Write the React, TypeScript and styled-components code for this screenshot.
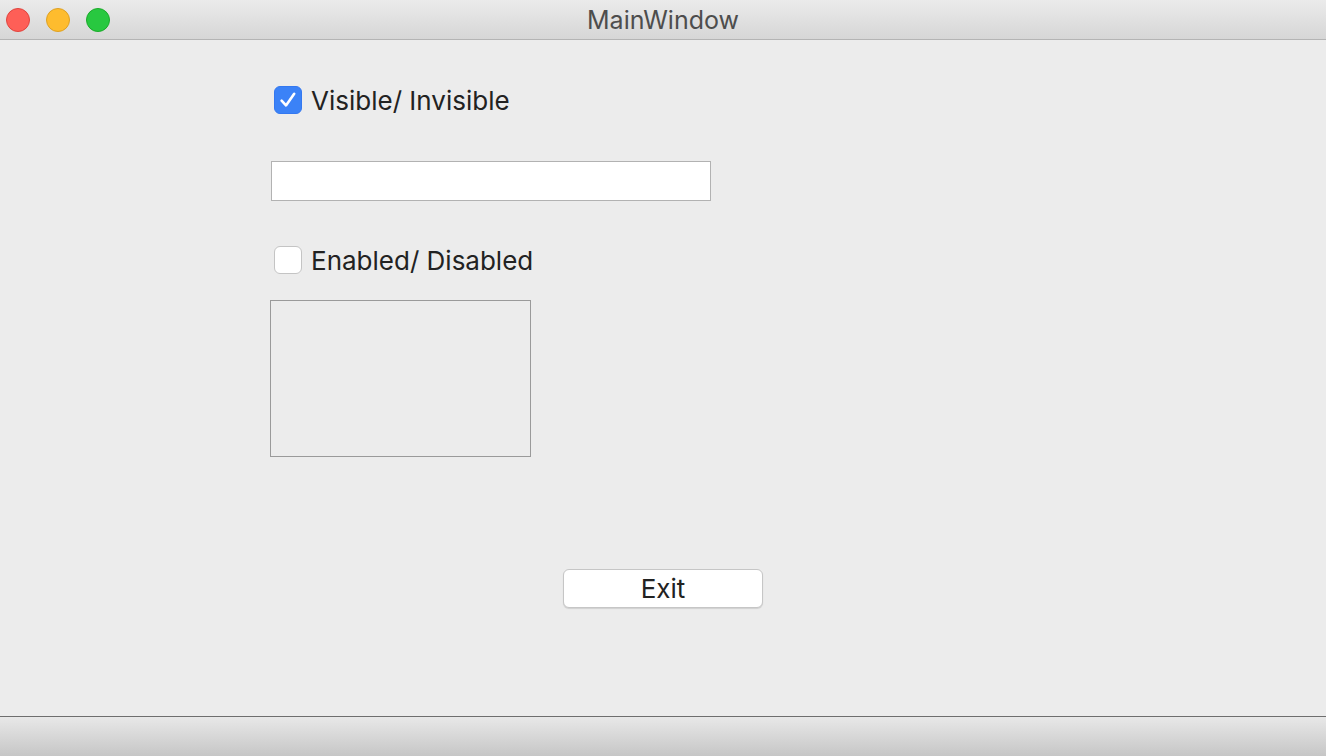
import React from "react";
import styled, { createGlobalStyle } from "styled-components";

const Global = createGlobalStyle`
  html, body { margin: 0; padding: 0; }
  body { font-family: "Inter", "Noto Sans", sans-serif; background: #ececec; }
`;

const Window = styled.div`
  width: 1326px;
  height: 756px;
  display: flex;
  flex-direction: column;
  background: #ececec;
  overflow: hidden;
`;

const TitleBar = styled.div`
  height: 39px;
  flex: none;
  display: flex;
  align-items: center;
  position: relative;
  background: linear-gradient(#ebebeb, #d6d6d6);
  border-bottom: 1px solid #b4b4b4;
`;

const Lights = styled.div`
  display: flex;
  gap: 16px;
  padding-left: 6px;
`;

const Light = styled.span<{ $fill: string; $edge: string }>`
  width: 24px;
  height: 24px;
  border-radius: 50%;
  box-sizing: border-box;
  background: ${(p) => p.$fill};
  border: 1px solid ${(p) => p.$edge};
`;

const Title = styled.div`
  position: absolute;
  left: 0;
  right: 0;
  top: 0;
  bottom: 0;
  display: flex;
  align-items: center;
  justify-content: center;
  font-size: 25px;
  color: #4d4d4d;
  pointer-events: none;
`;

const Content = styled.div`
  flex: 1;
  display: flex;
  flex-direction: column;
  padding-left: 270px;
`;

const CheckRow = styled.label<{ $top: number }>`
  display: flex;
  align-items: center;
  gap: 9px;
  margin-top: ${(p) => p.$top}px;
  margin-left: 4px;
  height: 28px;
  font-size: 26px;
  font-weight: 400;
  line-height: 28px;
  color: #222222;
`;

const Box = styled.span<{ $checked?: boolean }>`
  width: 28px;
  height: 28px;
  flex: none;
  box-sizing: border-box;
  border-radius: 6px;
  display: flex;
  align-items: center;
  justify-content: center;
  background: ${(p) => (p.$checked ? "#3b82f7" : "#ffffff")};
  border: 1px solid ${(p) => (p.$checked ? "#3478f0" : "#c4c4c4")};
`;

const LabelText = styled.span`
  position: relative;
  top: 1px;
`;

const TextInput = styled.div`
  margin-top: 47px;
  margin-left: 1px;
  width: 440px;
  height: 40px;
  box-sizing: border-box;
  background: #ffffff;
  border: 1px solid #b2b2b2;
`;

const Frame = styled.div`
  margin-top: 26px;
  width: 261px;
  height: 157px;
  box-sizing: border-box;
  border: 1px solid #9a9a9a;
`;

const ButtonRow = styled.div`
  display: flex;
  justify-content: center;
  margin-left: -270px;
  margin-top: 112px;
`;

const Button = styled.button`
  width: 200px;
  height: 39px;
  box-sizing: border-box;
  background: #ffffff;
  border: 1px solid #c6c6c6;
  border-radius: 6px;
  box-shadow: 0 1px 1px rgba(0, 0, 0, 0.12);
  font-family: "Inter", "Noto Sans", sans-serif;
  font-size: 26px;
  font-weight: 400;
  color: #222222;
  padding: 0;
`;

const StatusBar = styled.div`
  height: 39px;
  flex: none;
  border-top: 1px solid #6e6e6e;
  background: linear-gradient(#e8e8e8, #c6c6c6);
`;

const Check = () => (
  <svg width="20" height="20" viewBox="0 0 20 20">
    <path d="M3.6 10.6 L8 15.4 L16.2 3.8" fill="none" stroke="#fff" strokeWidth="2.6" strokeLinecap="round" strokeLinejoin="round" />
  </svg>
);

export default function App() {
  return (
    <>
      <Global />
      <Window>
        <TitleBar>
          <Lights>
            <Light $fill="#fe5f57" $edge="#e0443e" />
            <Light $fill="#febc2e" $edge="#dea123" />
            <Light $fill="#28c840" $edge="#1aab29" />
          </Lights>
          <Title>MainWindow</Title>
        </TitleBar>
        <Content>
          <CheckRow $top={46}>
            <Box $checked>
              <Check />
            </Box>
            <LabelText>Visible/ Invisible</LabelText>
          </CheckRow>
          <TextInput />
          <CheckRow $top={45}>
            <Box />
            <LabelText>Enabled/ Disabled</LabelText>
          </CheckRow>
          <Frame />
          <ButtonRow>
            <Button>Exit</Button>
          </ButtonRow>
        </Content>
        <StatusBar />
      </Window>
    </>
  );
}
